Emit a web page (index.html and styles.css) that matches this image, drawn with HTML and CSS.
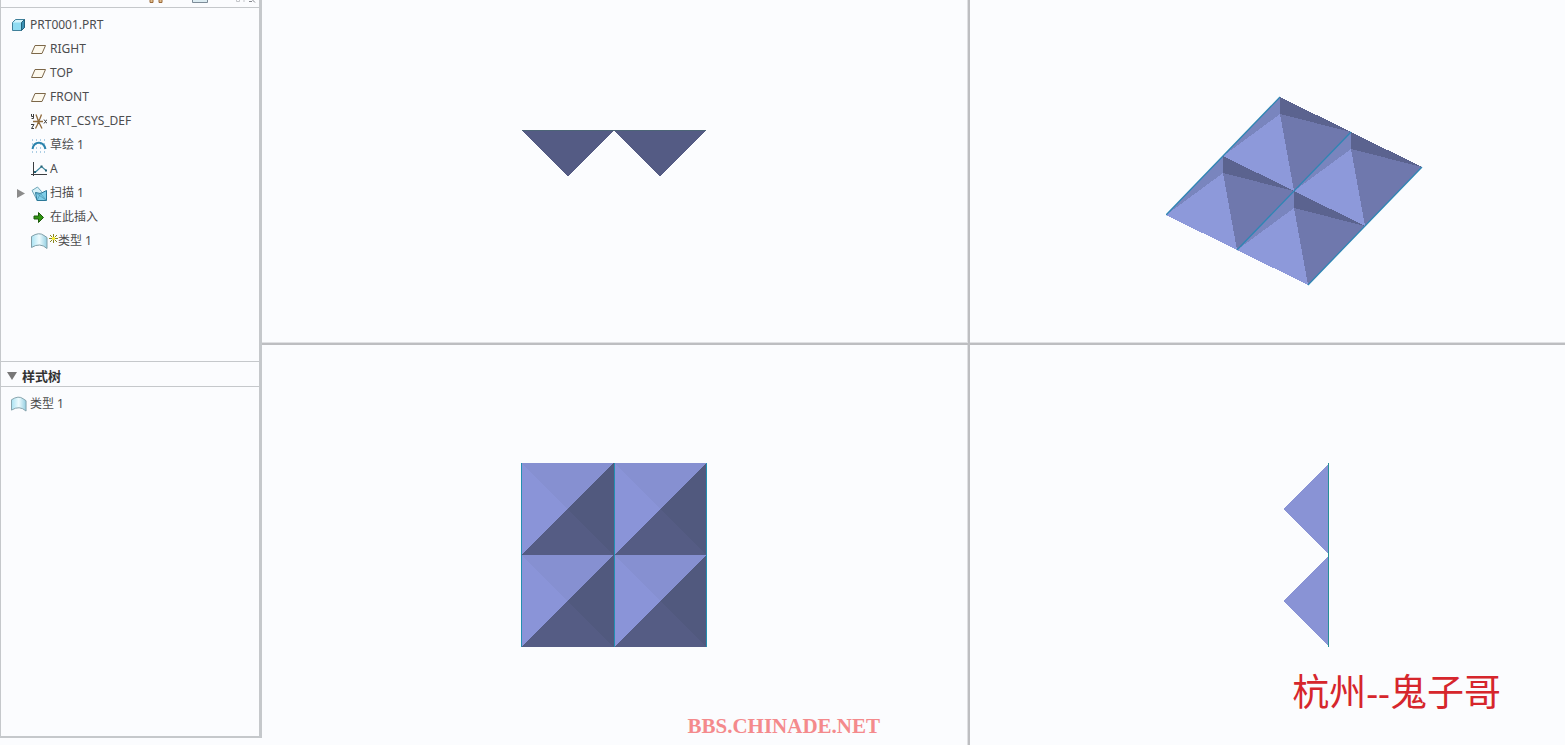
FILE: index.html
```html
<!DOCTYPE html>
<html lang="zh-CN">
<head>
    <meta charset="UTF-8">
    <meta name="viewport" content="width=device-width, initial-scale=1.0">
    <title>PRT0001.PRT</title>
    <link rel="stylesheet" href="styles.css">
</head>
<body>
    <aside class="sidebar">
        <div class="toolbar">
            <button type="button" aria-label="查找">
                <svg width="16" height="7" viewBox="0 0 16 7"><path d="M1 0v2.500h3V0M10 0v2.500h3V0" fill="#e2bd8c" stroke="#9a6a3a"/></svg>
            </button>
            <button type="button" aria-label="显示">
                <svg width="18" height="7" viewBox="0 0 18 7"><path d="M1.500-1v3.500h15V-1" fill="#dcecf2" stroke="#7d8c98"/></svg>
            </button>
            <button type="button" aria-label="设置">
                <svg width="22" height="7" viewBox="0 0 22 7"><path d="M1.500 0v1.500h3V0M9 0v2" fill="none" stroke="#c4c6ca"/><path d="M14 1.500h3M16.500-1l3.500 3.500" fill="none" stroke="#85888e"/></svg>
            </button>
        </div>

        <div class="tree">
            <div class="row root">
                <svg class="icon" viewBox="0 0 16 16">
                    <path d="M1.500 5.500l3-3h9v8l-3 3h-9z" fill="#8fdcf2" stroke="#3f809a"/>
                    <path d="M2 5.500l3-2.500h8l-2.500 2.500z" fill="#d3f4fc"/>
                    <path d="M10.500 5.500v8l3-3v-8z" fill="#3c92b4" stroke="#24617c"/>
                </svg>
                <span>PRT0001.PRT</span>
            </div>
            <ul>
                <li class="row"><span class="slot"></span>
                    <svg class="icon" viewBox="0 0 16 16"><path d="M4 4.500h10.500l-3.500 8H.5z" fill="#fdf9ee" stroke="#7c6749"/></svg>
                    <span>RIGHT</span></li>
                <li class="row"><span class="slot"></span>
                    <svg class="icon" viewBox="0 0 16 16"><path d="M4 4.500h10.500l-3.500 8H.5z" fill="#fdf9ee" stroke="#7c6749"/></svg>
                    <span>TOP</span></li>
                <li class="row"><span class="slot"></span>
                    <svg class="icon" viewBox="0 0 16 16"><path d="M4 4.500h10.500l-3.500 8H.5z" fill="#fdf9ee" stroke="#7c6749"/></svg>
                    <span>FRONT</span></li>
                <li class="row"><span class="slot"></span>
                    <svg class="icon" viewBox="0 0 16 16">
                        <path d="M2 8.500h10M5 1.500l1.500 4 1 3-1 3-2 4M10.500 1.500l-1.500 4-1.500 3 1.500 3 2 4" fill="none" stroke="#8f6a3c" stroke-width="1.300"/>
                        <path d="M.5 1v2.500h2M2.500 1v4.500H.5M0 11.500h3L.5 15.500H3M13 6.500l3 4M16 6.500l-3 4" fill="none" stroke="#3d3d3d"/>
                    </svg>
                    <span>PRT_CSYS_DEF</span></li>
                <li class="row"><span class="slot"></span>
                    <svg class="icon" viewBox="0 0 16 16">
                        <path d="M1 3h15M1 7h15M1 11h15M1 15h15" stroke="#5f9fca" stroke-dasharray="1 3"/>
                        <path d="M1.500 12C3 3.500 12.500 3.500 14.500 12" fill="none" stroke="#2b83ac" stroke-width="2"/>
                    </svg>
                    <span>草绘 1</span></li>
                <li class="row"><span class="slot"></span>
                    <svg class="icon" viewBox="0 0 16 16">
                        <path d="M2.500 1v14M0 13.500h16" stroke="#3a3d40"/>
                        <path d="M4 11.500l6.500-6 4.500 4" fill="none" stroke="#3d88a0" stroke-width="1.200"/>
                        <path d="M3 10h2v2H3zM9.500 4.500h2v2h-2zM14 8.500h2v2h-2z" fill="#245f73"/>
                    </svg>
                    <span>A</span></li>
                <li class="row"><button type="button" class="slot" aria-label="展开"><svg width="10" height="10" viewBox="0 0 10 10"><path d="M1 1l8 4.500L1 10z" fill="#8b8b8b"/></svg></button>
                    <svg class="icon" viewBox="0 0 16 16">
                        <path d="M1 5.500L6.500 2l4 4.500L6 15z" fill="#d7f1f8" stroke="#6fa6b8"/>
                        <path d="M4.500 7.500l5 1 6-3v10H6z" fill="#7fcde8" stroke="#2b7797"/>
                        <path d="M9.500 8.500l6 7M9.500 8.500l-3.500 7M4.500 7.500l11 8" fill="none" stroke="#4c97b0" stroke-width=".7"/>
                    </svg>
                    <span>扫描 1</span></li>
                <li class="row"><span class="slot"></span>
                    <svg class="icon" viewBox="0 0 16 16"><path d="M3 7h4.500V3.500l5 5-5 5V10H3z" fill="#2f9412" stroke="#1d5a0c"/></svg>
                    <span>在此插入</span></li>
                <li class="row feature"><span class="slot"></span>
                    <svg class="icon surface" viewBox="0 0 17 16">
                        <defs><linearGradient id="sheet" x2="1"><stop offset="0" stop-color="#a9e2f2"/><stop offset=".5" stop-color="#eefbfe"/><stop offset="1" stop-color="#93cfe2"/></linearGradient></defs>
                        <path d="M.5 3.500Q8-1.500 13 2.500l3 2v11Q9 9 .5 14.500z" fill="url(#sheet)" stroke="#7f9ea8"/>
                    </svg>
                    <svg class="new" viewBox="0 0 10 16"><path d="M5.500 1v9M1 5.500h9M2 2l7 7M9 2L2 9" stroke="#8a8720"/><path d="M4 4h3v3H4z" fill="#f6ee3a"/></svg>
                    <span>类型 1</span></li>
            </ul>
        </div>

        <button type="button" class="section-head">
            <svg width="10" height="8" viewBox="0 0 10 8"><path d="M0 0h10L5 8z" fill="#777"/></svg>
            样式树
        </button>
        <div class="tree style-tree">
            <div class="row root">
                <svg class="icon" viewBox="0 0 17 16"><path d="M.5 3.500Q8-1.500 13 2.500l3 2v11Q9 9 .5 14.500z" fill="url(#sheet)" stroke="#7f9ea8"/></svg>
                <span>类型 1</span>
            </div>
        </div>
    </aside>

    <main class="views">
        <section class="view front">
            <svg width="185" height="47" viewBox="0 0 185 47" shape-rendering="crispEdges">
                <path d="M0 0h92L46 47zM92 0h92L138 47z" fill="#545b84"/>
                <path d="M0 0h184v1H0z" fill="#4c6477"/>
            </svg>
        </section>

        <section class="view iso">
            <svg width="259" height="190" viewBox="0 0 259 190">
                <defs>
                    <g id="pyramid" shape-rendering="crispEdges">
                        <path d="M57 0L0 59l57-42z" fill="#7985be"/>
                        <path d="M57 0l71 35-71-18z" fill="#5b638f"/>
                        <path d="M57 17L0 59l71 35z" fill="#8d99da"/>
                        <path d="M57 17l71 18-57 59z" fill="#6f78ad"/>
                    </g>
                </defs>
                <use href="#pyramid" x="57" y="1"/>
                <use href="#pyramid" x="128" y="36"/>
                <use href="#pyramid" x="0" y="60"/>
                <use href="#pyramid" x="71" y="95"/>
                <path d="M114 1L0 119M185 36L71 154M256 71L142 189" stroke="#2f86b4" stroke-width="1.300"/>
            </svg>
        </section>

        <section class="view top">
            <svg width="187" height="184" viewBox="0 0 187 184" shape-rendering="crispEdges">
                <defs>
                    <g id="cell">
                        <path d="M0 0h93L46 46z" fill="#8690d1"/>
                        <path d="M0 0v92l47-46z" fill="#8a94d8"/>
                        <path d="M93 0v92L46 46z" fill="#51597e"/>
                        <path d="M0 92h93L46 46z" fill="#555c84"/>
                    </g>
                </defs>
                <use href="#cell"/>
                <use href="#cell" x="93"/>
                <use href="#cell" y="92"/>
                <use href="#cell" x="93" y="92"/>
                <path d="M0 0h1v184H0zM93 0h1v184h-1zM185 0h1v184h-1z" fill="#238fb0"/>
            </svg>
            <p class="site">BBS.CHINADE.NET</p>
        </section>

        <section class="view side">
            <svg width="47" height="185" viewBox="0 0 47 185" shape-rendering="crispEdges">
                <path d="M46 0v92L0 46zM46 92v92L0 138z" fill="#8993d5"/>
                <path d="M45 0h1v184h-1z" fill="#258f98"/>
            </svg>
            <p class="author">杭州--鬼子哥</p>
        </section>
    </main>
</body>
</html>
```
FILE: styles.css
```css
* {
    box-sizing: border-box;
}
body {
    margin: 0;
    height: 100vh;
    display: flex;
    overflow: hidden;
    background: #fbfcfe;
    color: #4c4c4e;
    font: 12px/24px "Noto Sans", "Noto Sans CJK SC", sans-serif;
}
button {
    padding: 0;
    border: 0;
    background: none;
    color: inherit;
    font: inherit;
}
ul, p {
    margin: 0;
    padding: 0;
}
svg {
    display: block;
    flex: none;
}

/* model tree */
.sidebar {
    width: 262px;
    height: calc(100vh - 7px);
    flex: none;
    display: flex;
    flex-direction: column;
    border: solid #c5c8cb;
    border-width: 0 3px 2px 1px;
}
.toolbar {
    height: 8px;
    display: flex;
    justify-content: flex-end;
    gap: 26px;
    padding-right: 2px;
    border-bottom: 1px solid #c5c8cb;
    overflow: hidden;
}
.toolbar button {
    height: 7px;
}
.tree {
    flex: 354;
    padding-top: 5px;
}
.style-tree {
    flex: 349;
}
.row {
    display: flex;
    align-items: center;
    gap: 3px;
    height: 24px;
    padding-left: 15px;
    white-space: nowrap;
}
.root {
    padding-left: 10px;
}
.slot {
    width: 12px;
    height: 10px;
}
.icon {
    width: 16px;
    height: 16px;
}
.feature {
    gap: 0;
}
.feature .surface {
    width: 17px;
    margin-left: 3px;
}
.new {
    width: 10px;
    height: 16px;
}
.section-head {
    display: flex;
    align-items: center;
    gap: 5px;
    height: 26px;
    padding: 3px 0 0 6px;
    border: solid #c5c8cb;
    border-width: 1px 0;
    color: #333;
    font-size: 13px;
    font-weight: bold;
}

/* four model views */
.views {
    flex: 1;
    display: grid;
    grid-template-columns: 708fr 595fr;
    grid-template-rows: 345fr 400fr;
}
.view {
    position: relative;
    display: flex;
    justify-content: center;
    align-items: flex-start;
}
.front, .top {
    padding-right: 1px;
    border-right: 2px solid #bdbec1;
    box-shadow: inset -1px 0 #dfe0e3;
}
.front, .iso {
    border-bottom: 2px solid #bdbec1;
    box-shadow: inset 0 -1px #dfe0e3;
}
.front {
    padding-top: 130px;
    box-shadow: inset -1px -1px #dfe0e3;
}
.iso {
    padding: 96px 0 0 56px;
}
.top {
    padding-top: 118px;
}
.side {
    padding: 118px 0 0 78px;
}
.site, .author {
    position: absolute;
    white-space: nowrap;
}
.site {
    right: 88px;
    bottom: 7px;
    color: #f48a8c;
    font: bold 21px/24px "Liberation Serif", serif;
}
.author {
    right: 64px;
    bottom: 31px;
    color: #d6262c;
    font: 37px/44px "Noto Sans", "Noto Sans CJK SC", sans-serif;
}
```
